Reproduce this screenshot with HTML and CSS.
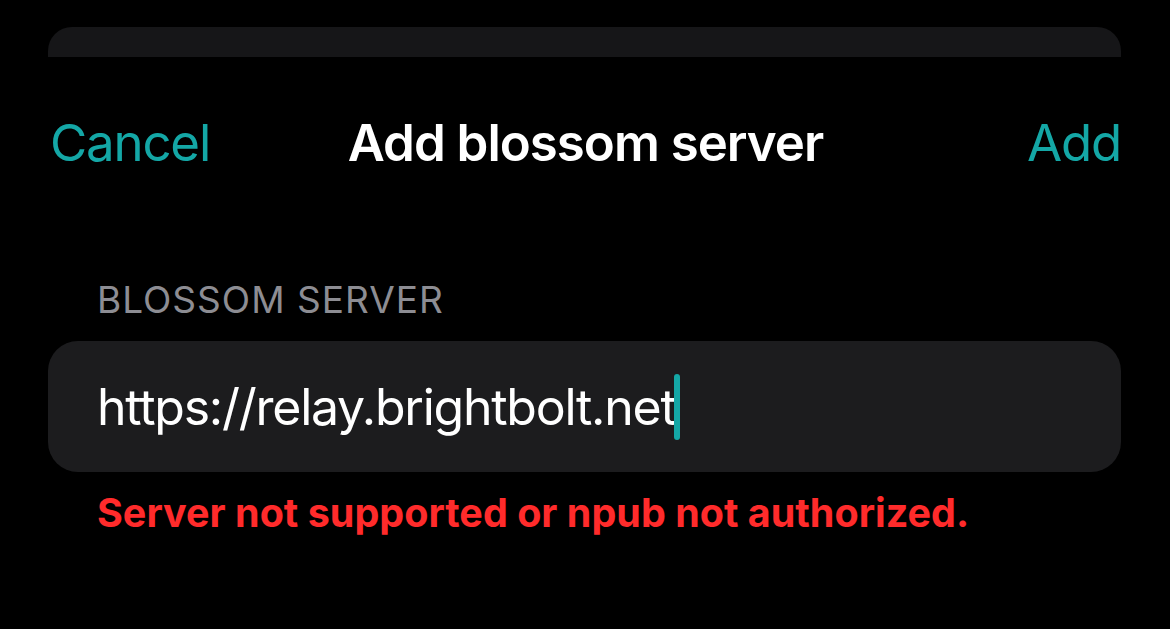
FILE: index.html
```html
<!DOCTYPE html>
<html>
<head>
<meta charset="utf-8">
<link rel="stylesheet" href="styles.css">
</head>
<body>
<div class="sheet-peek"></div>
<div class="nav">
  <span class="nav-btn">Cancel</span>
  <span class="nav-title">Add blossom server</span>
  <span class="nav-btn nav-right">Add</span>
</div>
<div class="section">
  <div class="section-label">BLOSSOM SERVER</div>
  <div class="field"><span class="field-text">https://relay.brightbolt.net</span><span class="caret"></span></div>
  <div class="error">Server not supported or npub not authorized.</div>
</div>
</body>
</html>
```
FILE: styles.css
```css
html, body {
  margin: 0;
  padding: 0;
  background: #000;
  width: 1170px;
  height: 629px;
  overflow: hidden;
  font-family: Inter, "Liberation Sans", sans-serif;
}
.sheet-peek {
  margin: 27px 49px 0 48px;
  height: 30px;
  background: #161618;
  border-radius: 24px 24px 0 0;
}
.nav {
  display: grid;
  grid-template-columns: 1fr auto 1fr;
  align-items: center;
  height: 170px;
  padding: 0 49px 0 50px;
}
.nav-btn {
  color: #14a7a6;
  font-size: 51px;
  letter-spacing: -1.2px;
}
.nav-right {
  justify-self: end;
}
.nav-title {
  color: #fff;
  font-size: 51px;
  font-weight: 600;
  letter-spacing: -1px;
}
.section {
  padding: 0 49px 0 48px;
  margin-top: 48px;
}
.section-label {
  color: #8d8d93;
  font-size: 37px;
  letter-spacing: 1px;
  padding-left: 49px;
  line-height: 50px;
}
.field {
  margin-top: 16px;
  height: 131px;
  background: #1c1c1e;
  border-radius: 30px;
  display: flex;
  align-items: center;
  padding-left: 49px;
}
.field-text {
  color: #fff;
  font-size: 50px;
  letter-spacing: -1.25px;
}
.caret {
  width: 6px;
  height: 66px;
  background: #14a7a6;
  border-radius: 3px;
  margin-left: -2px;
}
.error {
  color: #ff2b2b;
  font-weight: 700;
  font-size: 39.5px;
  padding-left: 49px;
  margin-top: 17px;
}
```
